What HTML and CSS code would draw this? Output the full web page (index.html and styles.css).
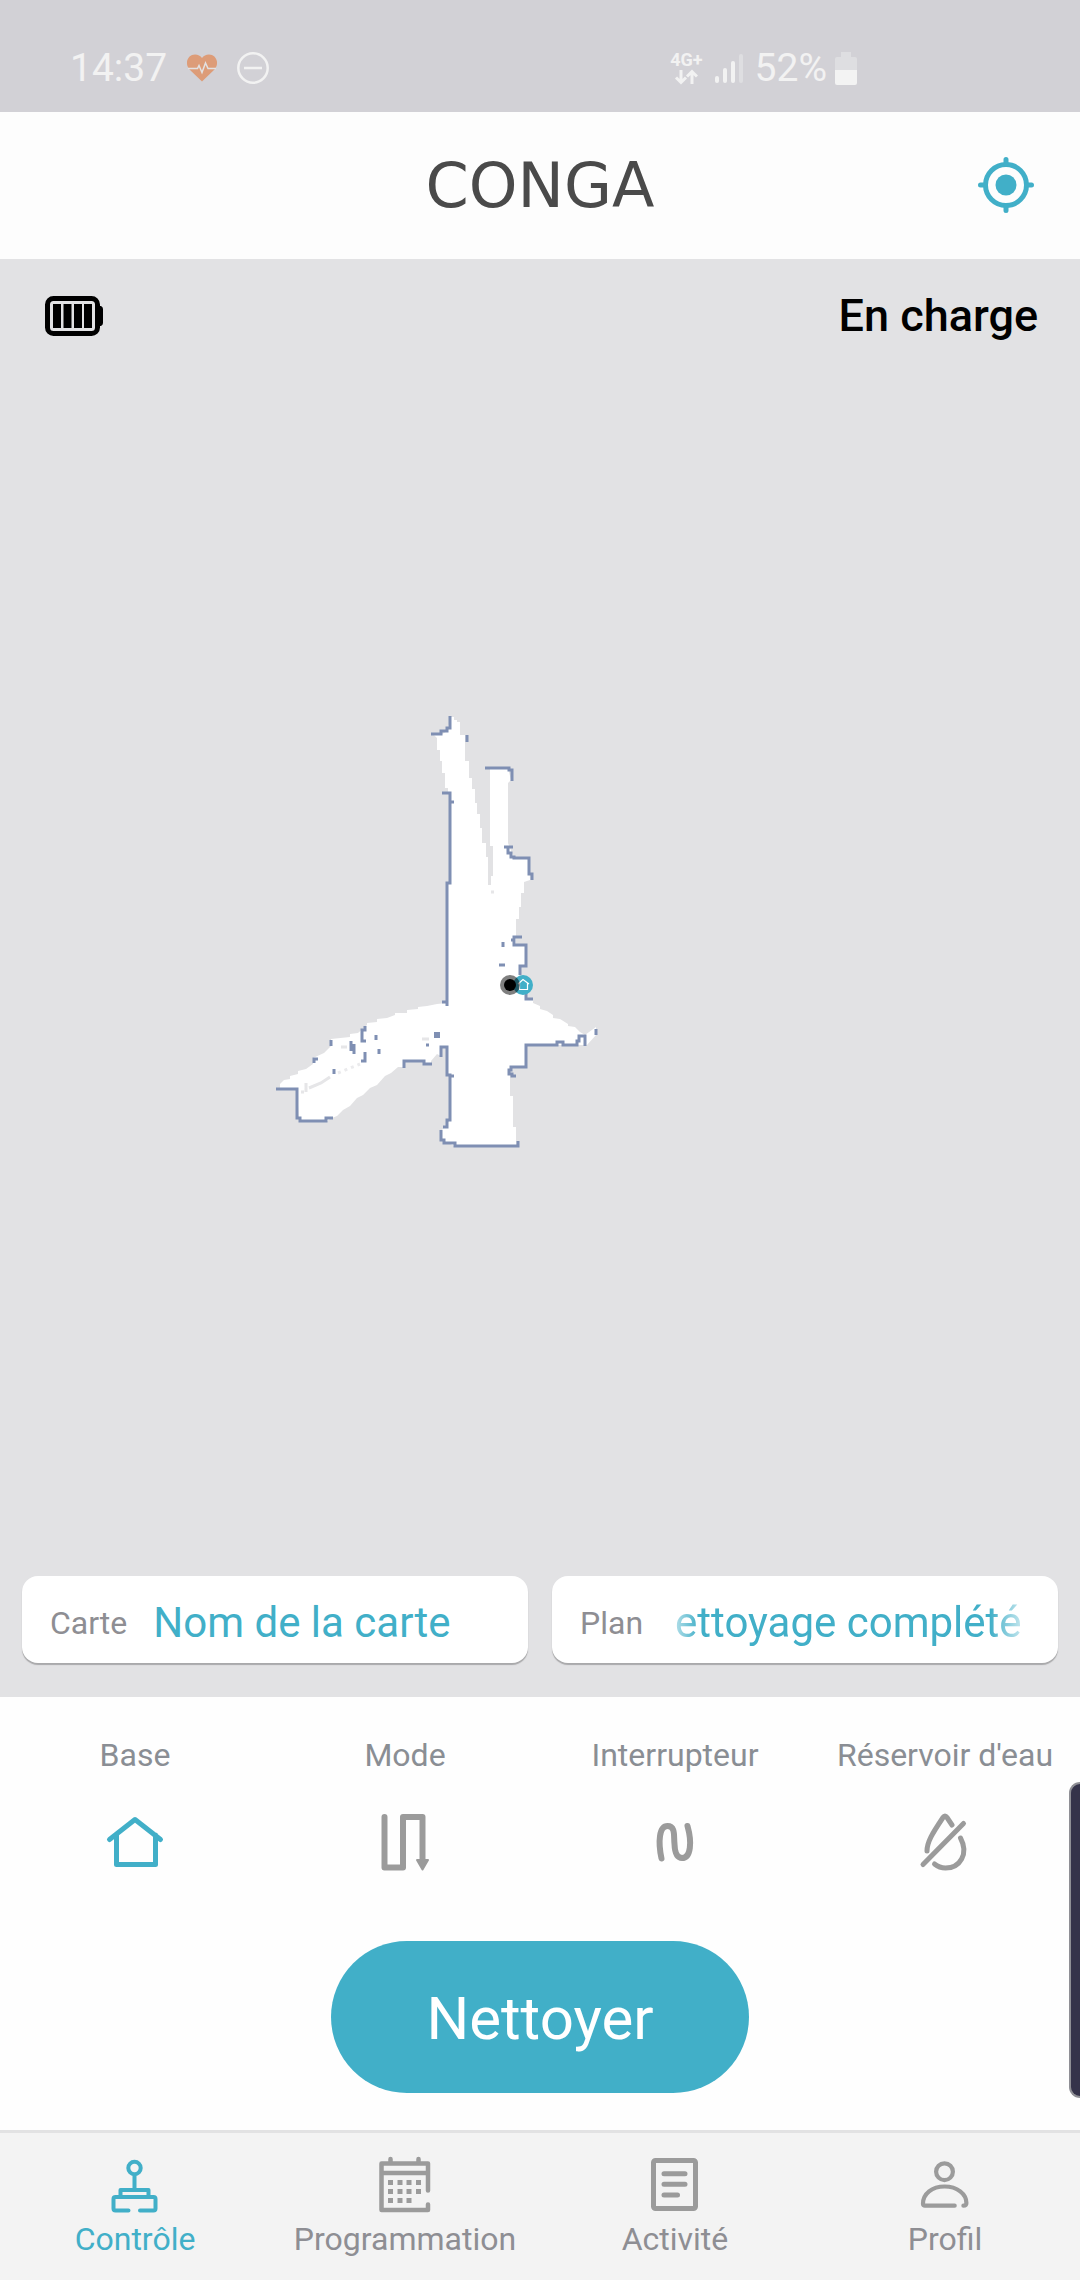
FILE: index.html
```html
<!DOCTYPE html>
<html lang="fr">
<head>
  <meta charset="UTF-8" />
  <meta name="viewport" content="width=device-width, initial-scale=1" />
  <title>Conga</title>
  <link rel="stylesheet" href="styles.css">
</head>
<body>

  <div class="status-bar">
    <div class="status-group">
      <span class="status-text">14:37</span>
      <svg class="status-heart" width="30" height="28" viewBox="0 0 30 28">
        <path fill="#dd9c78" d="M15 27.500 2.500 15.500C-3 9 1 .5 8 .5c3 0 5.500 1.500 7 3.500C16.500 2 19 .5 22 .5c7 0 11 8.500 5.500 15z" />
        <path fill="none" stroke="#e3e1e1" stroke-width="1.500" d="M1 14.500h9.500l1.500-3 3 7 3.500-9.500 2.500 5.500h8" />
      </svg>
      <svg width="32" height="32" viewBox="0 0 32 32" fill="none" stroke="#f2f2f2" stroke-width="2.500">
        <circle cx="16" cy="16" r="14.700" />
        <path d="M7 16h18" />
      </svg>
    </div>
    <div class="status-group status-right">
      <div class="network">
        <span>4G+</span>
        <svg width="24" height="16" viewBox="0 0 24 16" fill="none" stroke="#f2f2f2" stroke-width="3">
          <path d="M7 1v13M2 8.500l5 5 5-5M18 15V2M13 7.500l5-5 5 5" />
        </svg>
      </div>
      <svg width="28" height="30" viewBox="0 0 28 30" fill="#f2f2f2">
        <rect x="0" y="23" width="4" height="7" rx="2" />
        <rect x="8" y="15" width="4" height="15" rx="2" />
        <rect x="16" y="8" width="4" height="22" rx="2" />
        <rect x="24" y="1" width="4" height="29" rx="2" fill="#dedee1" />
      </svg>
      <div class="battery">
        <span class="status-text">52%</span>
        <svg width="22" height="33" viewBox="0 0 22 33">
          <path fill="#dedee1" d="M6 0h10v5h4q2 0 2 2v12H0V7q0-2 2-2h4z" />
          <path fill="#f3f3f3" d="M0 18h22v13q0 2-2 2H2q-2 0-2-2z" />
        </svg>
      </div>
    </div>
  </div>

  <header class="header">
    <svg class="logo" width="262" height="100" viewBox="0 0 262 100" role="img" aria-label="Conga">
      <text x="131" y="72" text-anchor="middle">CONGA</text>
    </svg>
    <button type="button" class="locate" aria-label="Localiser">
      <svg width="56" height="56" viewBox="0 0 56 56" fill="none" stroke="#41afc8" stroke-width="5" stroke-linecap="round">
        <circle cx="28" cy="28" r="20.500" />
        <circle cx="28" cy="28" r="10.500" fill="#41afc8" stroke="none" />
        <path d="M28 2.500v5M28 48.500v5M2.500 28h5M48.500 28h5" />
      </svg>
    </button>
  </header>

  <main class="map">
    <div class="map-info">
      <svg width="58" height="40" viewBox="0 0 58 40">
        <rect x="2.500" y="2.500" width="50" height="35" rx="6" fill="none" stroke="#000" stroke-width="5" />
        <path d="M54 10h2q2 1 2 3v14q0 2-2 3h-2zM8 8h8v24H8zM18.500 8h8v24h-8zM29 8h8v24h-8zM39 8h8v24h-8z" />
      </svg>
      <span>En charge</span>
    </div>

    <svg class="plan" viewBox="0 376 1080 1200" role="img" aria-label="Carte de la maison">
      <!-- explored floor -->
      <path fill="#fff" d="M451 717H454V720H457V722H460V735H465V761H469V778H472V789H475V803H477V814H480V828H482V843H486V857H488V885H491V876H493V846H490V768H508L511 780L508 783V843L514 858H529L530 880L524 882V893H521V907H519V919H516V945H526V966H520V975L526 990V1000H533V1003L540 1006V1009L547 1011L553 1015V1018L560 1019L568 1024V1026L575 1027L580 1032L585 1035L596 1027V1035L587 1045H526V1067H510V1096H513V1127H516V1146H455L442 1141V1130L450 1120V1075L447 1072V1047H441V1056L437 1054L431 1061V1064H424V1061H404V1067H398L391 1073L385 1076L377 1085L370 1088L363 1095L357 1098L350 1106L343 1110L337 1116L332 1118L327 1121H299L297 1089L280 1088V1084L284 1080L290 1079V1076L298 1074V1071L306 1069L313 1064V1058L324 1053L331 1046V1039L350 1037V1034L358 1033L367 1025V1023L377 1022V1019L387 1018L395 1015V1013L407 1013V1010L418 1009V1007L427 1006L437 1004L447 1003V883H450V793H448V788H445V773H442V761H440V750H437V738L434 735H441L447 731Z" />
      <path fill="none" stroke="#e6e6e8" stroke-width="3" d="M422 1039h7M341 1047h6M491 892h3M306 1083v9M301 1092h3M309 1088l12-5 9-6" />
      <path fill="none" stroke="#ebebed" stroke-width="3" stroke-dasharray="3 4" d="M338 1073l22-9" />

      <!-- walls -->
      <path class="wall" d="M450 716v12h-3v3h-6v3h-10M467 735v7M442 793h8v90h-3v123M450 802h4M447 1002h-5M485 768h24v2h3v11" />
      <path class="wall" d="M504 847h9M508 847v6h3v4h3v1h15v16h3v6M522 937h-8v3h-3M514 940v5h12v21h-6v9M503 942v5M499 965h6M526 993v6h7" />
      <path class="wall" d="M596 1029v6M585 1046v-10h-6v5h-2v4h-14v-3h-6v3h-31v22h-15v3h-2v4h3v2h4" />
      <path class="wall" d="M518 1141v5h-63v-3h-11v-3h-3v-10M443 1127h4v-7h3v-45h-3v-28h-6v10M450 1076h4M426 1045h3" />
      <path class="wall" d="M404 1068v-7h20v3h8M276 1089h21v29h3v3h26v-3h7M314 1063v-4h4M331 1040v6M334 1069v5" />
      <path class="wall" d="M351 1041v10M354 1044v10M365 1026v4h-3v11h4M376 1035v5M379 1049v5M365 1052v9h-4" />
      <path fill="#7f8fb3" d="M434 1032h6v6h-6z" />

      <!-- charging base and robot -->
      <circle cx="523" cy="985" r="10" fill="#41afc8" />
      <path fill="none" stroke="#fff" stroke-width="1.200" d="M518 984l5-4.500 6 4.500M519.500 983v6.500h8v-6.500" />
      <circle cx="510" cy="985" r="10" fill="#000" fill-opacity=".5" />
      <circle cx="510" cy="985" r="6" />
    </svg>

    <div class="selectors">
      <button type="button" class="selector">
        <span class="selector-label">Carte</span>
        <span class="selector-value">Nom de la carte</span>
      </button>
      <button type="button" class="selector">
        <span class="selector-label">Plan</span>
        <span class="selector-value fade">ettoyage complété</span>
      </button>
    </div>
  </main>

  <section class="panel">
    <div class="options">
      <button type="button" class="option">
        <span>Base</span>
        <svg class="icon active" viewBox="0 0 60 60" stroke-width="5">
          <path d="M4.500 27.500 30 7.500l25.500 20M11.500 23v29.500h39V23" />
        </svg>
      </button>
      <button type="button" class="option">
        <span>Mode</span>
        <svg class="icon" viewBox="0 0 60 60" stroke-width="6">
          <path d="M9.500 5v50.500H28V5h19.500v43" />
          <path fill="#9b9b9b" stroke-width="2" d="M42 48h11l-5.500 9.500z" />
        </svg>
      </button>
      <button type="button" class="option">
        <span>Interrupteur</span>
        <svg class="icon" viewBox="0 0 60 60" stroke-width="6">
          <path d="M16.500 46.500C13 30 14 14 22.500 14S28.500 25 29.500 32c.3 9 2 14 7.500 14 9 0 10-16 5.500-32" />
        </svg>
      </button>
      <button type="button" class="option">
        <span>Réservoir d'eau</span>
        <svg class="icon" viewBox="0 0 60 60" stroke-width="5">
          <path d="M8 52.500l40.500-41M12 39c0-9 5-17 16-33.500q2-3 4 0l5 7.500M45.500 26C54 42 45 56 30.500 56q-6 0-11-4" />
        </svg>
      </button>
    </div>
    <button type="button" class="clean">Nettoyer</button>
    <div class="edge-handle"></div>
  </section>

  <nav class="tabs">
    <a href="#controle" class="tab current">
      <svg class="icon active" viewBox="0 0 60 60" stroke-width="4">
        <circle cx="29.500" cy="13" r="6.200" />
        <path d="M29.500 20v14M15.500 41v-6h28v6M23.500 55.500h-13q-2 0-2-2V44q0-2 2-2h38q2 0 2 2v9.500q0 2-2 2H35" />
      </svg>
      <span>Contrôle</span>
    </a>
    <a href="#programmation" class="tab">
      <svg class="icon" viewBox="0 0 60 60" stroke-width="4.500">
        <path d="M53 35.500v-27H6.500V55H53v-5.500M6.500 18H53M15.500 4v4M43.500 4v4" />
        <path fill="#9b9b9b" stroke="none" d="M13 25h5v5h-5zM22.500 25h5v5h-5zM31.500 25h5v5h-5zM41 25h5v5h-5zM13 34h5v5h-5zM22.500 34h5v5h-5zM31.500 34h5v5h-5zM41 34h5v5h-5zM13 43h5v5h-5zM22.500 43h5v5h-5zM31.500 43h5v5h-5z" />
      </svg>
      <span>Programmation</span>
    </a>
    <a href="#activite" class="tab">
      <svg class="icon" viewBox="0 0 60 60" stroke-width="5">
        <rect x="8.500" y="5.500" width="42" height="48" rx="2" />
        <path d="M19 18.700h21M19 29.300h21M19 40h13.500" />
      </svg>
      <span>Activité</span>
    </a>
    <a href="#profil" class="tab">
      <svg class="icon" viewBox="0 0 60 60" stroke-width="4.200">
        <circle cx="29.500" cy="16.700" r="8.400" />
        <path d="M39.700 50.700H10q-2 0-2-2C8 39 17 31.500 29.600 31.500S51.400 39 51.400 48q0 2.700-3 2.700" />
      </svg>
      <span>Profil</span>
    </a>
  </nav>

</body>
</html>
```
FILE: styles.css
```css
* {
  box-sizing: border-box;
}

body {
  margin: 0;
  min-height: 100vh;
  display: flex;
  flex-direction: column;
  font-family: Roboto, "Noto Sans", sans-serif;
  background: #fefefe;
  color: #000;
}

button {
  font-family: inherit;
  border: none;
  padding: 0;
  background: none;
  cursor: pointer;
}

svg {
  display: block;
  flex-shrink: 0;
}

/* Phone status bar */
.status-bar {
  height: 112px;
  padding: 48px 223px 0 70px;
  display: flex;
  justify-content: space-between;
  background: #d2d1d6;
  color: #f2f2f2;
}

.status-group {
  height: 40px;
  display: flex;
  align-items: center;
  gap: 20px;
}

.status-right {
  gap: 12px;
}

.status-text {
  font-size: 39px;
  line-height: 40px;
}

.battery {
  display: flex;
  align-items: center;
  gap: 8px;
}

.network {
  display: flex;
  flex-direction: column;
  align-items: center;
  font-size: 18px;
  line-height: 18px;
  font-weight: 700;
}

/* Header */
.header {
  height: 147px;
  padding: 0 46px 2px;
  display: grid;
  grid-template-columns: 1fr auto 1fr;
  align-items: center;
  background: #fdfdfd;
}

.logo {
  grid-column: 2;
}

.logo text {
  font-family: "DejaVu Sans", sans-serif;
  font-size: 62px;
  fill: #4a4a4a;
}

.locate {
  justify-self: end;
}

/* Map */
.map {
  flex: 1;
  display: flex;
  flex-direction: column;
  background: #e2e2e4;
}

.map-info {
  height: 117px;
  padding: 0 42px 4px 45px;
  display: flex;
  justify-content: space-between;
  align-items: center;
  font-size: 45px;
  font-weight: 500;
}

.plan {
  flex: 1;
  width: 100%;
  min-height: 0;
}

.wall {
  fill: none;
  stroke: #7f8fb3;
  stroke-width: 3;
}

.selectors {
  display: grid;
  grid-template-columns: 1fr 1fr;
  gap: 24px;
  padding: 0 22px 34px;
}

.selector {
  height: 87px;
  padding: 6px 28px 0;
  display: flex;
  align-items: center;
  min-width: 0;
  border-radius: 16px;
  background: #fff;
  box-shadow: 0 2px 1px #a9a9ab;
}

.selector-label {
  font-size: 32px;
  color: #8e8e93;
}

.selector-value {
  margin-left: 26px;
  font-size: 42px;
  color: #41afc8;
  white-space: nowrap;
  overflow: hidden;
}

.selector-value.fade {
  margin-left: 32px;
  -webkit-mask-image: linear-gradient(90deg, rgba(0,0,0,0.4), #000 24px, #000 calc(100% - 32px), rgba(0,0,0,0.3));
  mask-image: linear-gradient(90deg, rgba(0,0,0,0.4), #000 24px, #000 calc(100% - 32px), rgba(0,0,0,0.3));
}

/* Controls */
.panel {
  position: relative;
  padding: 38px 0 37px;
  background: #fefefe;
  text-align: center;
}

.options {
  display: grid;
  grid-template-columns: repeat(4, 1fr);
  margin-bottom: 69px;
}

.option {
  display: flex;
  flex-direction: column;
  align-items: center;
  gap: 37px;
  font-size: 32px;
  line-height: 40px;
  color: #8a8e94;
}

.icon {
  width: 60px;
  height: 60px;
  fill: none;
  stroke: #9b9b9b;
  stroke-linecap: round;
  stroke-linejoin: round;
}

.icon.active {
  stroke: #41afc8;
}

.clean {
  width: 418px;
  height: 152px;
  padding-top: 3px;
  border-radius: 76px;
  background: #41afc8;
  color: #fff;
  font-size: 60px;
}

.edge-handle {
  position: absolute;
  top: 85px;
  right: 0;
  width: 11px;
  height: 316px;
  border: 2px solid #8f8f95;
  border-right: none;
  border-radius: 12px 0 0 12px;
  background: #35334a;
}

/* Bottom tabs */
.tabs {
  height: 150px;
  padding-top: 22px;
  display: grid;
  grid-template-columns: repeat(4, 1fr);
  border-top: 3px solid #e2e2e3;
  background: #f3f3f3;
}

.tab {
  display: flex;
  flex-direction: column;
  align-items: center;
  gap: 4px;
  font-size: 32px;
  line-height: 40px;
  color: #8e8e93;
  text-decoration: none;
}

.tab.current {
  color: #41afc8;
}
```
